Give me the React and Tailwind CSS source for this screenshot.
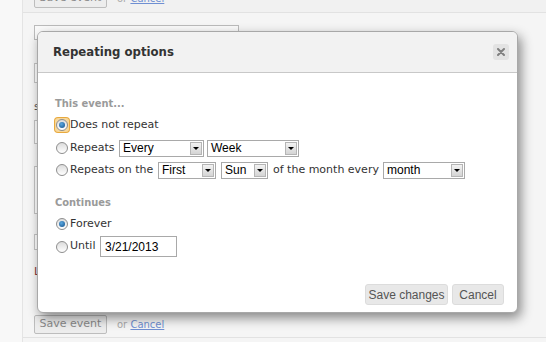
import React from 'react'

const sans = "font-['DejaVu_Sans',Verdana,sans-serif]"
const cond = "font-['DejaVu_Sans_Condensed','DejaVu_Sans',Tahoma,sans-serif]"
const arial = "font-['Liberation_Sans',Arial,sans-serif]"

function Radio({ checked, focused }) {
  const dot = (
    <span className="flex h-[12px] w-[12px] items-center justify-center rounded-full border border-[#8e8e8e] bg-gradient-to-b from-[#dcdcdc] to-white">
      {checked && <span className="h-[6px] w-[6px] rounded-full bg-[radial-gradient(circle_at_40%_35%,#5aa8e0,#134f8a)]" />}
    </span>
  )
  if (focused) {
    return <span className="flex h-[14px] w-[14px] items-center justify-center rounded-[3px] bg-[#f7d79a] ring-1 ring-[#e8a93d]">{dot}</span>
  }
  return <span className="flex h-[14px] w-[14px] items-center justify-center">{dot}</span>
}

function Select({ value, width }) {
  return (
    <span className={`flex h-[17px] items-center justify-between border border-[#a9a9a9] bg-white pl-[3px] pr-[1px] ${arial} text-[12px] text-black ${width}`}>
      <span>{value}</span>
      <span className="flex h-[13px] w-[12px] items-center justify-center border border-[#b5b5b5] bg-gradient-to-b from-[#f2f2f2] to-[#d4d4d4]">
        <span className="h-0 w-0 border-x-[3px] border-t-[3px] border-x-transparent border-t-black" />
      </span>
    </span>
  )
}

function BgButtonRow() {
  return (
    <div className="flex items-center gap-[10px]">
      <span className={`flex h-[19px] w-[73px] items-center justify-center rounded-[2px] border border-[#bdbdbd] bg-[#ededed] ${sans} text-[11px] text-[#8a8a8a]`}>
        Save event
      </span>
      <span className={`${sans} text-[10px] text-[#aaa]`}>
        or <span className="text-[#6f8fd2] underline">Cancel</span>
      </span>
    </div>
  )
}

export default function App() {
  return (
    <div className="relative h-[342px] w-[546px] overflow-hidden bg-[#f8f8f8]">
      <div className="ml-[22px] flex h-full flex-col border-l border-[#e4e4e4] bg-[#f5f5f5]">
        <div className="h-[13px] border-b border-[#e2e2e2] bg-[#f1f1f1] pl-[11px]">
          <div className="-mt-[11px]">
            <BgButtonRow />
          </div>
        </div>
        <div className="flex h-[301px] flex-col pl-[11px] pt-[12px]">
          <div className="h-[15px] w-[205px] border border-[#bbb] bg-[#fafafa]" />
          <div className="mt-[23px] h-[20px] w-[205px] border border-[#c4c4c4] bg-white" />
          <div className={`mt-[16px] ${sans} text-[11px] text-[#555]`}>s</div>
          <div className="mt-[4px] h-[24px] w-[205px] border border-[#c4c4c4] bg-white" />
          <div className="mt-[22px] h-[48px] w-[205px] border border-[#c4c4c4] bg-white" />
          <div className="mt-[20px] h-[16px] w-[205px] border border-[#c4c4c4] bg-white" />
          <div className={`mt-[14px] ${sans} text-[11px] text-[#8b3a3a]`}>L</div>
        </div>
        <div className="h-[24px] border-b border-[#e2e2e2] pl-[11px] pt-[1px]">
          <BgButtonRow />
        </div>
      </div>

      <div className="absolute left-[37px] top-[31px] flex h-[282px] w-[481px] flex-col overflow-hidden rounded-[6px] border border-[#a8a8a8] bg-white shadow-[3px_5px_12px_rgba(0,0,0,0.45)]">
        <div className="flex h-[41px] items-center justify-between border-b border-[#c8c8c8] bg-[#f2f2f2] pl-[15px] pr-[8px]">
          <span className={`${cond} text-[13px] font-bold text-[#333]`}>Repeating options</span>
          <span className="flex h-[16px] w-[16px] items-center justify-center rounded-[3px] bg-[#e3e3e3]">
            <svg width="8" height="8" viewBox="0 0 8 8">
              <path d="M1 1L7 7M7 1L1 7" stroke="#808080" strokeWidth="2" strokeLinecap="round" />
            </svg>
          </span>
        </div>

        <div className={`flex flex-1 flex-col pl-[17px] pt-[24px] ${sans} text-[11px] text-[#333]`}>
          <div className={`h-[14px] ${cond} font-bold leading-[14px] text-[#9a9a9a]`}>This event...</div>
          <div className="mt-[3px] flex h-[22px] items-center">
            <Radio checked focused />
            <span className="ml-[1px]">Does not repeat</span>
          </div>
          <div className="mt-[1px] flex h-[22px] items-center">
            <Radio />
            <span className="ml-[1px] w-[49px]">Repeats</span>
            <Select value="Every" width="w-[85px]" />
            <span className="w-[3px]" />
            <Select value="Week" width="w-[92px]" />
          </div>
          <div className="flex h-[22px] items-center">
            <Radio />
            <span className="ml-[1px] w-[88px]">Repeats on the</span>
            <Select value="First" width="w-[58px]" />
            <span className="w-[5px]" />
            <Select value="Sun" width="w-[47px]" />
            <span className="ml-[5px] w-[110px]">of the month every</span>
            <Select value="month" width="w-[82px]" />
          </div>

          <div className={`mt-[15px] h-[14px] ${cond} font-bold leading-[14px] text-[#9a9a9a]`}>Continues</div>
          <div className="mt-[3px] flex h-[22px] items-center">
            <Radio checked />
            <span className="ml-[1px]">Forever</span>
          </div>
          <div className="flex h-[23px] items-center">
            <Radio />
            <span className="ml-[1px] w-[30px]">Until</span>
            <span className={`flex h-[21px] w-[77px] items-center border border-[#a9a9a9] bg-white pl-[4px] ${arial} text-[12px] text-black`}>
              3/21/2013
            </span>
          </div>
        </div>

        <div className={`flex justify-end gap-[4px] pb-[7px] pr-[13px] ${arial} text-[12px] text-[#555]`}>
          <span className="flex h-[21px] w-[83px] items-center justify-center rounded-[3px] border border-[#dcdcdc] bg-[#e8e8e8]">Save changes</span>
          <span className="flex h-[21px] w-[52px] items-center justify-center rounded-[3px] border border-[#dcdcdc] bg-[#e8e8e8]">Cancel</span>
        </div>
      </div>
    </div>
  )
}
